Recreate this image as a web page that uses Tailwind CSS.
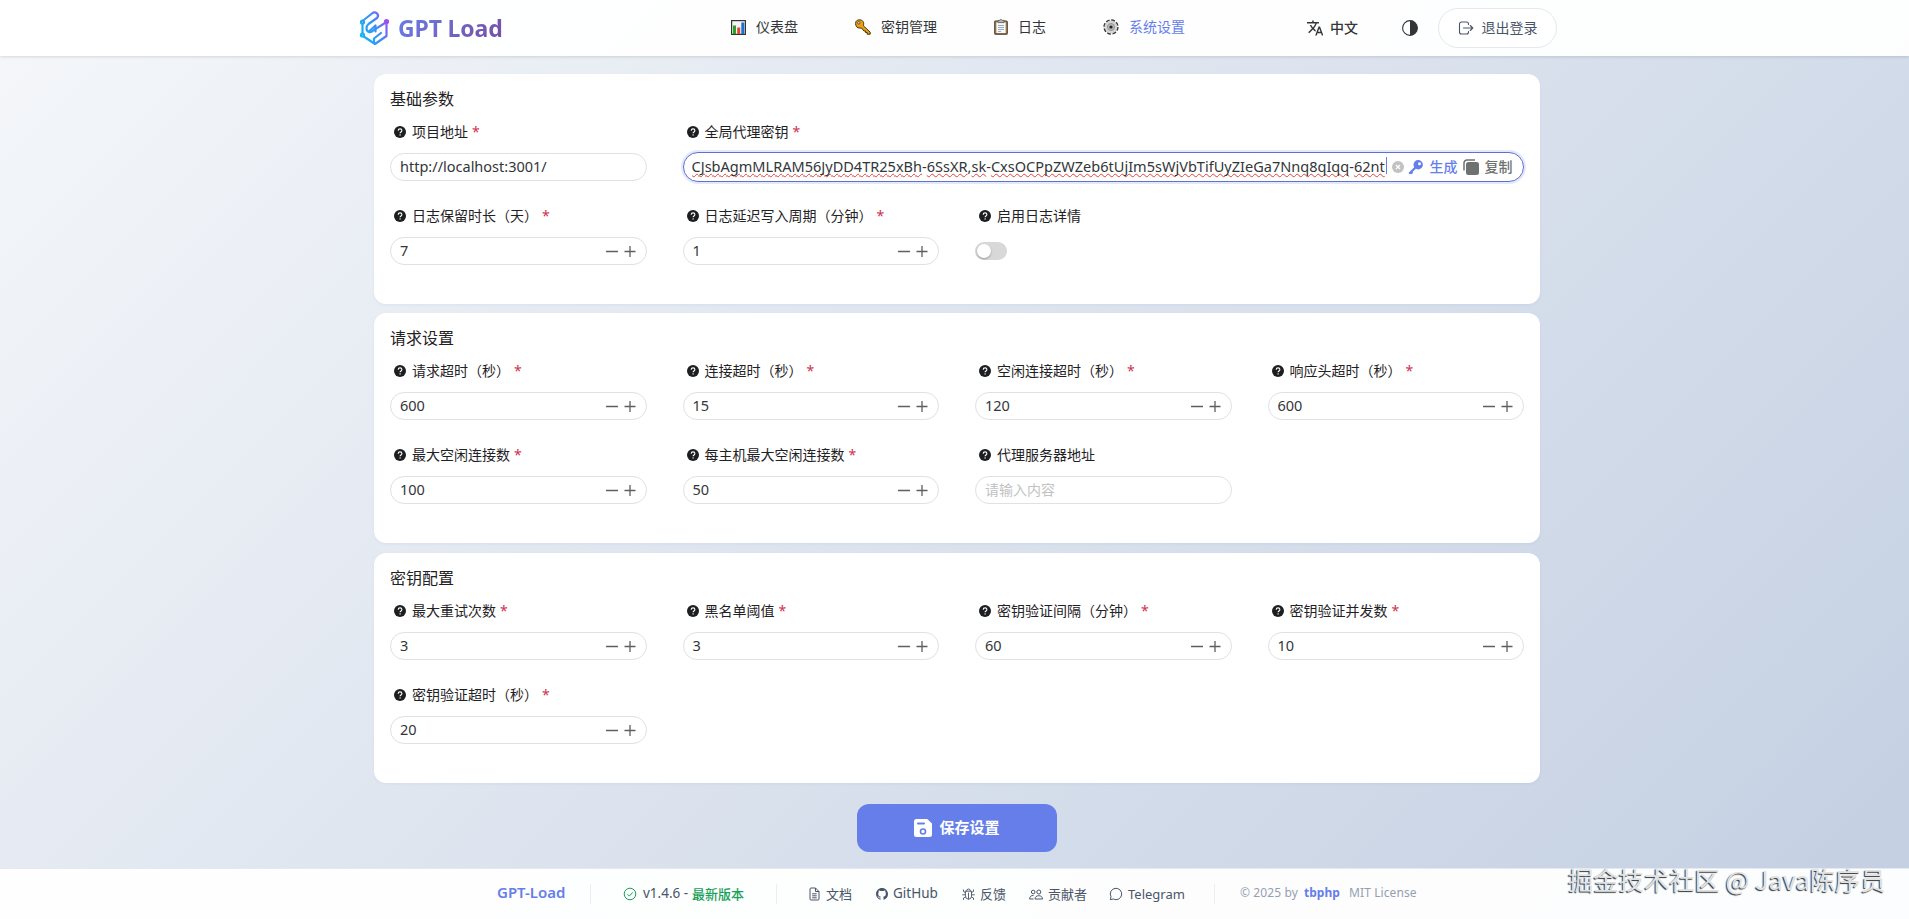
<!DOCTYPE html>
<html lang="zh-CN">
<head>
    <meta charset="UTF-8">
    <meta name="viewport" content="width=device-width, initial-scale=1.0">
    <title>系统设置 | GPT Load</title>
    <script src="https://cdn.jsdelivr.net/npm/@tailwindcss/browser@4"></script>
</head>
<body class="h-[919px] overflow-hidden flex flex-col bg-linear-135 from-[#f5f7fa] to-[#c3cfe2] text-[#1f2225] text-sm font-['Noto_Sans','Noto_Sans_CJK_SC',sans-serif]">

    <!-- Header -->
    <header class="h-[56px] shrink-0 bg-white/95 shadow-[0_1px_3px_rgba(0,0,0,0.12)]">
        <div class="w-[1200px] h-full ml-[358px] flex items-center">
            <div class="w-[373px] flex items-center">
                <svg class="w-[32px] h-[36px] shrink-0" viewBox="0 0 32 36" fill="none" stroke="url(#logo)" stroke-width="2.2" stroke-linecap="round" stroke-linejoin="round">
                    <defs>
                        <linearGradient id="logo" gradientUnits="userSpaceOnUse" x1="2" y1="24" x2="30" y2="12">
                            <stop offset="0" stop-color="#12b5f5"/>
                            <stop offset="0.6" stop-color="#3f8cf5"/>
                            <stop offset="1" stop-color="#a04cf5"/>
                        </linearGradient>
                    </defs>
                    <path d="M4.500 13.500v10M4.500 11L14 3.500c3.500-2.700 8 1 5 4.500L10.500 14c-3 2.500-2.500 7 .5 8 1.800.6 3-.3 4-1.300L28.500 12v14L17 34 5 26"/>
                    <path d="M11.500 21L17.500 15.500v6M16 33v-4.500l7-5.500"/>
                    <circle cx="4.500" cy="12" r="1.500" fill="#fff"/><circle cx="4.500" cy="25" r="1.500" fill="#fff"/><circle cx="28.500" cy="11.500" r="1.500" fill="#a04cf5"/>
                </svg>
                <span class="ml-[8px] -mt-px text-[23px] leading-[32px] font-bold tracking-[-0.150px] whitespace-nowrap bg-linear-135 from-[#667eea] to-[#764ba2] bg-clip-text text-transparent">GPT Load</span>
            </div>
            <nav class="flex items-center w-[576px] leading-[20px] text-[#333639] -mt-[2px]">
                <a class="w-[124px] flex items-center gap-[10px]">
                    <svg class="w-[15px] h-[15px]" viewBox="0 0 15 15"><rect x=".6" y=".6" width="13.800" height="13.800" fill="#f4f4f4" stroke="#333" stroke-width="1.200"/><path d="M2 5.500h3V14H2z" fill="#2ca02c"/><path d="M6.200 7.500h3V14h-3z" fill="#e04a2a"/><path d="M10.300 2.500h3V14h-3z" fill="#1a6fd0"/></svg>
                    <span>仪表盘</span>
                </a>
                <a class="w-[139px] flex items-center gap-[10px]">
                    <svg class="w-[16px] h-[16px]" viewBox="0 0 16 16"><path d="M1 2.500C2.500.3 6.500.2 8 2.500c1 1.500.8 3 .3 4.200l6.900 6.500v2h-3v-1.700h-1.600V12H9L6.500 9C4 9.500 1.500 8.500.9 6.500c-.4-1.400-.4-2.900.1-4z" fill="#eca012" stroke="#42300a"/><circle cx="3.800" cy="3.800" r="1.200" fill="#fff" stroke="#42300a" stroke-width=".8"/></svg>
                    <span>密钥管理</span>
                </a>
                <a class="w-[109px] flex items-center gap-[10px]">
                    <svg class="w-[14px] h-[16px]" viewBox="0 0 14 16"><rect x=".8" y="2" width="12.400" height="13.200" rx="1" fill="#c49a62" stroke="#44362a" stroke-width="1.200"/><path d="M2.500 3.500h9V14h-9z" fill="#f7fafc"/><path d="M4 2.500V1.400h1.500L7 .4l1.500 1H10v2.200H4z" fill="#bbb" stroke="#555" stroke-width=".8"/><path d="M4 6.500h6M4 8.500h6M4 10.500h6M4 12.500h3" stroke="#7d98a8" stroke-width=".8"/></svg>
                    <span>日志</span>
                </a>
                <a class="flex items-center gap-[10px] text-[#667eea]">
                    <svg class="w-[16px] h-[16px]" viewBox="0 0 16 16"><circle cx="8" cy="8" r="6.700" fill="none" stroke="#333" stroke-width="1.900" stroke-dasharray="3.700 1.562"/><circle cx="8" cy="8" r="6.400" fill="#d4d4d4"/><circle cx="8" cy="8" r="3.600" fill="#b5b5b5" stroke="#888" stroke-width=".7"/><circle cx="8" cy="8" r="1.600" fill="#222"/></svg>
                    <span>系统设置</span>
                </a>
            </nav>
            <div class="flex items-center text-[#333639]">
                <svg class="w-[16px] h-[16px] shrink-0" viewBox="1 1.500 21.500 21" fill="currentColor"><path d="M12.870 15.070l-2.540-2.510.03-.03A17.520 17.520 0 0 0 14.070 6H17V4h-7V2H8v2H1v1.990h11.170C11.500 7.920 10.440 9.750 9 11.350 8.070 10.320 7.300 9.190 6.690 8h-2c.73 1.630 1.730 3.170 2.980 4.560l-5.090 5.020L4 19l5-5 3.110 3.110.76-2.040zM18.500 10h-2L12 22h2l1.120-3h4.750L21 22h2l-4.500-12zm-2.620 7l1.620-4.330L19.120 17h-3.240z"/></svg>
                <span class="ml-[7px] w-[72px] font-medium">中文</span>
                <svg class="w-[16px] h-[16px] shrink-0" viewBox="0 0 16 16"><circle cx="8" cy="8" r="7.400" fill="none" stroke="currentColor" stroke-width="1.100"/><path d="M8 .6a7.400 7.400 0 0 1 0 14.800z" fill="currentColor"/></svg>
                <button class="ml-[20px] w-[119px] h-[40px] shrink-0 flex items-center justify-center gap-[8px] rounded-full border border-[#e6e8ee] bg-white text-[#4a5568] whitespace-nowrap">
                    <svg class="w-[16px] h-[16px]" viewBox="0 0 16 16" fill="none" stroke="currentColor" stroke-width="1.100" stroke-linecap="round" stroke-linejoin="round"><path d="M10.500 4.500V4a2 2 0 0 0-2-2H3.500a2 2 0 0 0-2 2v8a2 2 0 0 0 2 2h5a2 2 0 0 0 2-2v-.5M5.500 8h9.300M12.300 5.500L14.800 8l-2.500 2.500"/></svg>
                    <span>退出登录</span>
                </button>
            </div>
        </div>
    </header>

    <!-- Settings cards, filled in by the script below -->
    <main class="h-[812px] shrink-0 pt-[18px] pl-[374px]">
        <div id="cards" class="w-[1166px] h-[709px] flex flex-col gap-[9px]"></div>
        <button class="ml-[483px] mt-[21px] w-[200px] h-[48px] rounded-xl bg-[#667eea] text-white text-[15px] font-bold flex items-center justify-center gap-[7px]">
            <svg class="w-[18px] h-[18px]" viewBox="0 0 18 18"><path fill-rule="evenodd" fill="currentColor" d="M2.500 0h10.800L18 4.500v11a2.500 2.500 0 0 1-2.500 2.500h-13A2.500 2.500 0 0 1 0 15.500v-13A2.500 2.500 0 0 1 2.500 0zM4 3.500a.8.800 0 0 0 0 2h6a.8.800 0 0 0 0-2zM9 9.200a3.300 3.300 0 1 0 0 6.600 3.300 3.300 0 0 0 0-6.600zm0 1.600a1.700 1.700 0 1 1 0 3.400 1.700 1.700 0 0 1 0-3.400z"/></svg>
            保存设置
        </button>
    </main>

    <!-- Footer -->
    <footer class="grow bg-white/95 border-t border-[#e6e9f0] text-[13px] text-[#4a5568]">
        <div class="ml-[497px] h-[50px] flex items-center whitespace-nowrap">
            <span class="w-[93px] text-[15px] font-semibold text-[#667eea] -mt-[3px]">GPT-Load</span>
            <i class="w-px h-[20px] bg-[#eceef2] mr-[32px]"></i>
            <div class="w-[153px] flex items-center">
                <svg class="w-[14px] h-[14px] mr-[6px] text-[#18a058]" viewBox="0 0 14 14" fill="none" stroke="currentColor"><circle cx="7" cy="7" r="5.800"/><path d="M4.500 7.300l1.800 1.800 3.400-3.700"/></svg>
                <span class="w-[49px] text-[13.500px]">v1.4.6 -</span>
                <span class="text-[#18a058] font-medium">最新版本</span>
            </div>
            <i class="w-px h-[20px] bg-[#eceef2] mr-[31px]"></i>
            <a class="w-[68px] flex items-center gap-[5px]">
                <svg class="w-[13px] h-[14px]" viewBox="0 0 13 14" fill="none" stroke="currentColor"><path d="M3 1h4.500L11 4.500V12a1 1 0 0 1-1 1H3a1 1 0 0 1-1-1V2a1 1 0 0 1 1-1zM7.500 1v3.500H11M4.200 6.800h4.500M4.200 8.800h4.500M4.200 10.800h4.500"/></svg>
                文档
            </a>
            <a class="w-[86px] flex items-center gap-[5px]">
                <svg class="w-[12px] h-[12px]" viewBox="0 0 16 16" fill="currentColor"><path d="M8 0C3.580 0 0 3.580 0 8c0 3.540 2.290 6.530 5.470 7.590.4.070.55-.17.55-.38v-1.490c-2.010.37-2.530-.49-2.690-.94-.09-.23-.48-.94-.82-1.130-.28-.15-.68-.52-.01-.53.63-.01 1.080.58 1.230.82.72 1.210 1.870.87 2.330.66.07-.52.28-.87.510-1.070-1.780-.2-3.640-.89-3.640-3.950 0-.87.31-1.590.82-2.150-.08-.2-.36-1.020.08-2.120 0 0 .67-.21 2.200.82a7.600 7.600 0 0 1 4 0c1.530-1.040 2.200-.82 2.200-.82.44 1.100.16 1.920.08 2.120.51.56.82 1.270.82 2.150 0 3.070-1.870 3.750-3.650 3.950.29.25.54.730.54 1.480v2.200c0 .21.15.46.55.38A8.010 8.010 0 0 0 16 8c0-4.420-3.580-8-8-8z"/></svg>
                <span class="text-[13.500px]">GitHub</span>
            </a>
            <a class="w-[67px] flex items-center gap-[5px]">
                <svg class="w-[13px] h-[14px]" viewBox="0 0 13 14" fill="none" stroke="currentColor" stroke-width=".9" stroke-linecap="round"><path d="M3.500 4.200h6v5a3 3 0 0 1-6 0zM4.500 4a2 2 0 0 1 4 0M6.500 6v6M1.500 3v1.500l2 1M11.500 3v1.500l-2 1M.6 7.800h2.800M9.600 7.800h2.800M1.500 12.500V11l2-1M11.500 12.500V11l-2-1"/></svg>
                反馈
            </a>
            <a class="w-[80px] flex items-center gap-[5px]">
                <svg class="w-[14px] h-[13px]" viewBox="0 0 14 13" fill="none" stroke="currentColor"><circle cx="4.200" cy="4" r="1.800"/><circle cx="9.800" cy="4" r="2"/><path d="M4.500 7.500C2 7.300.8 8.500.6 11h4M6 11c0-2 1.500-3.300 3.800-3.300s3.700 1.300 3.700 3.300z"/></svg>
                贡献者
            </a>
            <a class="w-[105px] flex items-center gap-[5px]">
                <svg class="w-[14px] h-[14px]" viewBox="0 0 14 14" fill="none" stroke="currentColor"><path d="M1.300 12.700l.7-3A5.700 5.700 0 1 1 4.300 12z"/></svg>
                Telegram
            </a>
            <i class="w-px h-[20px] bg-[#eceef2] mr-[25px]"></i>
            <p class="flex text-[12px] text-[#94a0b2] -mt-[3px]">
                <span class="w-[64px] tracking-[0.120px]">© 2025 by</span>
                <b class="w-[45px] font-bold text-[#667eea]">tbphp</b>
                <span class="tracking-[0.100px]">MIT License</span>
            </p>
        </div>
    </footer>

    <!-- Watermark -->
    <div class="absolute left-[1568px] top-[861px] text-[25.300px] leading-[36px] whitespace-nowrap text-[#e2e2e2] font-['Noto_Sans_CJK_SC',sans-serif] [text-shadow:-1px_1px_1px_#333]">掘金技术社区 @ Java陈序员</div>

    <script>
        const cards = [
            { title: "基础参数", fields: [
                { label: "项目地址", required: true, type: "text", value: "http://localhost:3001/" },
                { label: "全局代理密钥", required: true, type: "keys" },
                { label: "日志保留时长（天）", required: true, value: "7" },
                { label: "日志延迟写入周期（分钟）", required: true, value: "1" },
                { label: "启用日志详情", type: "switch" }
            ]},
            { title: "请求设置", fields: [
                { label: "请求超时（秒）", required: true, value: "600" },
                { label: "连接超时（秒）", required: true, value: "15" },
                { label: "空闲连接超时（秒）", required: true, value: "120" },
                { label: "响应头超时（秒）", required: true, value: "600" },
                { label: "最大空闲连接数", required: true, value: "100" },
                { label: "每主机最大空闲连接数", required: true, value: "50" },
                { label: "代理服务器地址", type: "empty" }
            ]},
            { title: "密钥配置", fields: [
                { label: "最大重试次数", required: true, value: "3" },
                { label: "黑名单阈值", required: true, value: "3" },
                { label: "密钥验证间隔（分钟）", required: true, value: "60" },
                { label: "密钥验证并发数", required: true, value: "10" },
                { label: "密钥验证超时（秒）", required: true, value: "20" }
            ]}
        ];

        const helpIcon = `<svg class="w-[12px] h-[12px] mr-[6px]" viewBox="0 0 12 12"><circle cx="6" cy="6" r="6" fill="#1c1e20"/><path d="M4.200 4.700c0-2.500 3.700-2.400 3.700-.1 0 1.400-1.800 1.300-1.800 2.700" fill="none" stroke="#fff" stroke-width="1.100"/><circle cx="6.100" cy="8.900" r=".7" fill="#fff"/></svg>`;
        const box = "h-[28px] rounded-[14px] border border-[#e0e0e6] bg-white flex items-center pl-[9px] pb-px text-[14.500px] text-[#333639]";
        const wavy = "underline decoration-wavy decoration-[#e5403c] decoration-1 underline-offset-[1px] [text-decoration-skip-ink:none]";

        function control(field) {
            if (field.type === "switch") {
                return `<div class="pt-[5px]"><div class="w-[32px] h-[18px] rounded-full bg-[#d8d8d8] p-[2px]"><div class="size-[14px] rounded-full bg-white shadow-[0_1px_2px_rgba(0,0,0,0.3)]"></div></div></div>`;
            }
            if (field.type === "empty") {
                return `<div class="${box}"><span class="text-[14px] text-[#c2c2c2]">请输入内容</span></div>`;
            }
            if (field.type === "text") {
                return `<div class="${box}">${field.value}</div>`;
            }
            if (field.type === "keys") {
                return `
                    <div class="-mt-px h-[30px] rounded-[15px] border border-[#5f70cf] shadow-[0_0_0_2px_rgba(102,126,234,0.18)] bg-white flex items-center pl-[8px] text-[14px] whitespace-nowrap text-[#333639]">
                        <div class="w-[694px] h-[26px] leading-[24px] text-[14.540px] overflow-hidden shrink-0"><span class="${wavy}">CJsbAgmMLRAM56JyDD4TR25xBh</span>-<span class="${wavy}">6SsXR</span>,<span class="${wavy}">sk</span>-<span class="${wavy}">CxsOCPpZWZeb6tUjIm5sWjVbTifUyZIeGa7Nnq8qIqq</span>-<span class="${wavy}">62nt</span></div>
                        <i class="w-px h-[17px] -mt-[3px] shrink-0 bg-[#667eea]"></i>
                        <svg class="w-[12px] h-[12px] ml-[5px] shrink-0" viewBox="0 0 12 12"><circle cx="6" cy="6" r="6" fill="#c2c2c2"/><path d="M4 4l4 4M8 4l-4 4" stroke="#fff" stroke-width="1.100"/></svg>
                        <svg class="w-[15px] h-[15px] ml-[4px] mr-[7px] shrink-0 text-[#667eea]" viewBox="0 0 15 15"><path d="M9 6L1.200 13.800M3 12l1.500 1.500" fill="none" stroke="currentColor" stroke-width="2.200"/><path fill-rule="evenodd" fill="currentColor" d="M10.200 0a4.700 4.700 0 1 1 0 9.400 4.700 4.700 0 0 1 0-9.400zm1.300 2.200a1.500 1.500 0 1 0 0 3 1.500 1.500 0 0 0 0-3z"/></svg>
                        <span class="w-[33px] shrink-0 font-medium text-[#667eea]">生成</span>
                        <svg class="w-[16px] h-[16px] mr-[6px] shrink-0 text-[#6d7170]" viewBox="0 0 16 16"><rect x="3" y="3" width="13" height="13" rx="2.500" fill="currentColor"/><path d="M1 11.500V4a3 3 0 0 1 3-3h8" fill="none" stroke="currentColor" stroke-width="1.500"/></svg>
                        <span class="font-medium text-[#6d7170]">复制</span>
                    </div>`;
            }
            return `
                <div class="${box} justify-between pr-[10px]">
                    <span>${field.value}</span>
                    <svg class="w-[30px] h-[12px]" viewBox="0 0 30 12" stroke="#5c5f62" stroke-width="1.300"><path d="M0 6.500h12M18.500 6.500h11M24 1v11"/></svg>
                </div>`;
        }

        document.getElementById("cards").innerHTML = cards.map(card => `
            <section class="h-[230px] shrink-0 last:mt-px rounded-xl bg-white px-[16px] pt-[14px] shadow-[0_1px_3px_rgba(90,110,160,0.08)]">
                <h3 class="text-[16px] leading-[22px]">${card.title}</h3>
                <div class="grid grid-cols-4 gap-x-[36px]">
                    ${card.fields.map(field => `
                        <div class="h-[84px] pt-[11px] ${field.type === "keys" ? "col-span-3" : ""}">
                            <label class="flex items-center h-[22px] mb-[10px] pl-[4px]">${helpIcon}<span>${field.label}</span>${field.required ? `<span class="ml-[4px] text-[#d03050]">*</span>` : ""}</label>
                            ${control(field)}
                        </div>`).join("")}
                </div>
            </section>`).join("");
    </script>

</body>
</html>
